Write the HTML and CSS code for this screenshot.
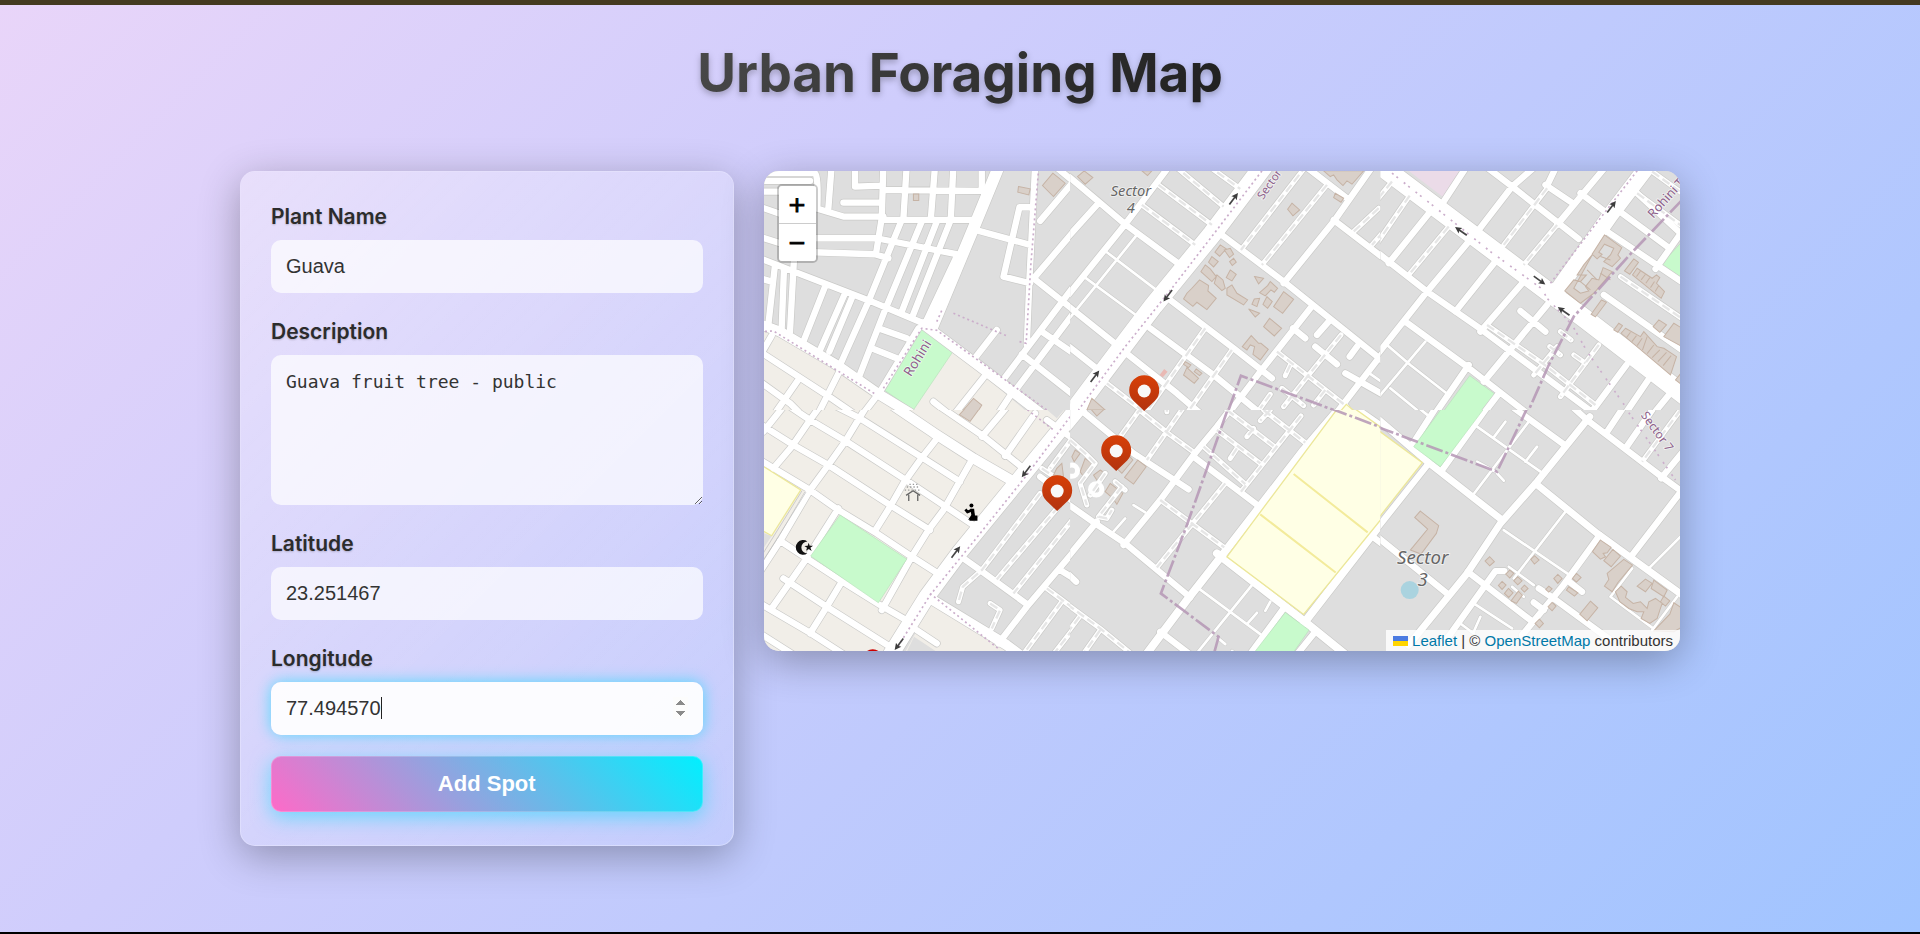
FILE: index.html
```html
<!DOCTYPE html>
<html lang="en">
<head>
<meta charset="utf-8">
<meta name="viewport" content="width=device-width, initial-scale=1">
<title>Urban Foraging Map</title>
<link rel="stylesheet" href="styles.css">
</head>
<body>
<header class="page-header">
  <h1 class="title">Urban Foraging Map</h1>
</header>
<main class="layout">
  <form class="card" onsubmit="return false">
    <div class="field">
      <label for="plant">Plant Name</label>
      <input class="control" id="plant" type="text" value="Guava">
    </div>
    <div class="field">
      <label for="desc">Description</label>
      <textarea class="control control-area" id="desc" spellcheck="false">Guava fruit tree - public</textarea>
    </div>
    <div class="field">
      <label for="lat">Latitude</label>
      <input class="control" id="lat" type="number" step="any" value="23.251467">
    </div>
    <div class="field">
      <label for="lng">Longitude</label>
      <div class="caret-box">
        <input class="control" id="lng" type="number" step="any" value="77.494570" autofocus>
        <span class="caret"></span>
      </div>
    </div>
    <button class="submit" type="submit">Add Spot</button>
  </form>

  <section class="map" aria-label="Map">
    <svg class="map-canvas" viewBox="764 171 916 480" preserveAspectRatio="xMidYMid slice">
      <defs>
        <linearGradient id="pinFill" x1="0" y1="0" x2="0" y2="1"><stop offset="0" stop-color="#d73f07"/><stop offset="1" stop-color="#b2330f"/></linearGradient>
        <g id="pin"><path d="M0 20 L-11 9.500 A15 15 0 1 1 11 9.500 Z" fill="url(#pinFill)"/><circle r="6.500" fill="#f8f8f8"/></g>
        <g id="arrow"><path d="M-21 0H8" stroke="#444" stroke-width="5" fill="none"/><path d="M2-10 22 0 2 10 6 0Z" fill="#3d3d3d"/></g>

        <path id="a-main" d="M718 0 640 190 515 490"/>
        <path id="a-mid" d="M0 478 60 500 230 600 360 690 450 745M490 478 660 605 860 760"/>
        <path id="a-res" d="M0 280 110 323 330 408 490 475M0 48H150M0 80H80M0 25H165Q175 30 172 130M215 0 205 130M0 126 70 150M160 128 250 155H370M0 216 70 238M160 220H350L600 270M160 262 345 268 385 280M285 0V65L365 62M370 0 365 160 348 265M440 0 430 160M250 113H365M370 75 665 78M365 165H640M525 0 512 165M580 0 572 165M665 0V78M425 165 325 410 240 600M485 170 375 435 295 640M530 170 425 440M570 170 455 460M592 270 495 475M0 340 35 350M45 300 25 480M72 310 65 490M102 280 90 500M195 365 130 530M255 385 180 555M275 400 208 560M355 490 440 520M335 550 410 580M475 490 360 680 310 745M645 195 810 240M825 0 808 340 800 540M815 127H778L730 335 810 355M940 50 840 168M940 200 825 335M820 340 940 435M880 0 940 50M940 365 725 650M940 445 755 690M845 500 940 565M785 568 940 690M710 495 640 585M0 560 200 690 280 745M0 650 90 715 120 745M118 640 45 745M238 620 175 745M520 710 570 750M675 632 585 745M755 685 715 745M10 555 35 512"/>

        <path id="b-main" d="M590-10 425 208 250 422 85 640-5 760"/>
        <path id="b-res" d="M-10 30 85 110 165 178 330 300M-10 220 85 115M300 0 165 178-10 395M-10 420 140 540M-10 540 85 615M455 210 640 350 940 590M910 0 790 170 640 355M700 0 830 100M790 165 940 280M300 405 490 550 605 640M175 570 320 685 390 745M240 490 430 630 570 745M720 430 570 620 475 745M668 490 705 520M775 470 740 510M735 545 800 598M860 545 838 575M825 625 940 690M940 560 790 755M-10 740 30 700"/>
        <path id="b-svc" d="M265 60 425 180M215 120 375 240M310 0 460 125M410 0 510 72M710 0 512 255M770 60 575 300M925 130 850 200M940 200 905 240M405 490 225 745M485 555 350 745M110 655 220 740M620 560 830 725M812 510 715 630 640 725M660 600 645 632M765 675 730 720M600 688 570 730M635 670 700 722"/>
        <path id="b-thin" d="M200 210 75 365-10 470M110 262 265 380M45 338 210 460M890 620 940 655"/>

        <path id="c-main" d="M-20-13 200 152 500 378 605 455 940 712"/>
        <path id="c-main2" d="M812-10 690 150 525 385"/>
        <path id="c-res" d="M262 0 190 110M470 0 395 65 295 195M310 0 395 65 595 222M680 0 530 180M495 60 572 112M600 85 680 145M530 0 500 62M770 85 900 205 930 220M725 145 860 245M940 150 825 312M680 200 940 375M150 140 25 295M-10 262 140 380 305 495 640 745M265 230 140 380-10 570M345 290 225 440M430 350 300 500M75 470 260 605 440 745M500 420 310 650M265 600 165 745M352 690 310 745M420 438 495 500M738 600 630 745M803 645 735 745M865 690 820 745M670 390 940 580"/>
        <path id="c-svc" d="M88 92-10 235M35 50-10 105M205 185 85 330M500 70 370 240M530 180 430 300M815 20 940 110M770 85 940 210M720 335 940 485M320 480 500 605 645 720M530 545 460 630M655 540 540 695M540 500 572 525M508 545 540 570M580 570 615 595"/>
        <path id="c-thin" d="M20 540 90 600 205 690M135 530 0 690-20 710M30 670 110 735"/>

        <path id="d-main" d="M960-15 780 205 600 425 500 560 385 745"/>
        <path id="d-mid" d="M390-20 520 68 640 145 770 220M510 565 740 705 800 750"/>
        <path id="d-res" d="M60-30 150 30 260 95 430 205 550 285 640 345M0 42 100 105 205 165 390 285 510 360M0 150 150 240 235 300 350 370 455 440 530 488M190-30 300 25 490 145 600 215M60 392 140 445 240 510 360 585 430 625M70 505 200 590 390 710M0 580 150 668 270 745M0 670 110 740M70-10 10 65M190-25 150 30 95 110 40 175M325-20 255 95 205 165 150 240 65 385-10 500M535 80 480 150 430 220 390 290 345 362M638 145 550 300 505 360 455 440 365 600M235 295 140 445 35 595M245 515 200 590 150 670M540-10 665 75 790 175M745-15 665 80M825 10 735 138M860 30 930 80M610 445 660 480 800 582M940 425 800 590 715 700M470 660 530 700M840 200 880 230 940 275M900 480 940 505"/>
        <path id="d-svc" d="M840 250 665 480 608 530 595 575M895 290 710 508M940 325 760 550M690 580 720 600 695 655M905 575 780 745M940 655 870 745M860 535 940 595M940 80 870 175M845 175 890 205"/>

        <path id="e-cross" d="M45-30-30 60"/>
        <path id="e-main" d="M820-20 700 120 460 430 350 570 215 750M440 430 710 640 840 745M940 330 700 640"/>
        <path id="e-res" d="M20-10 190 130 355 238M490-15 440 50 370 135 270 270 160 405M370 140 565 288M-10 280 75 340 165 400 360 562M80 335-10 445M-10 488 18 515M640 595 530 745M735 665 670 745M850-10 940 52M900 375 940 405M270 665 375 745"/>
        <path id="e-svc" d="M215-10 150 80M195-10 300 75 375 130M345-15 230 150M470 0 610 108M440 60 570 160M400 110 525 222M692 18 512 245M580 0 705 98M550 55 530 80M500 115 480 145M600 0 570 32M270 270 462 412M465 220 260 472M-10 582 90 655 200 745M28 620-10 670M90 660 30 745M0 90 45 130 75 160 30 220 50 285M105 190 60 255M135 215 165 240M155 230 85 320 110 325 125 300M290-10V5"/>
        <path id="e-thin" d="M385 535 570 672M545 525 375 735M560 608 530 642M600 575 585 602M190 285 225 307M165 325 130 365M445 685 465 702M485 722 500 735"/>

        <path id="f-main" d="M-10 25 150 162 365 330M628 20 470 215 360 340 260 490 85 705M465 220 650 370 940 580"/>
        <path id="f-res" d="M395-10 550 103M570-15 620 30 850 205 940 270M905 240 755 435M730-10 680 65M815 0 735 115M940 85 842 205M658 375 545 530 425 675M262 485 450 630M372 483H345L190 700M-10 380 200 550M145 160-10 355M325-15 185 180M175-20 95 105M560 510 605 545M475 535 520 565 690 690M460 577 490 600"/>
        <path id="f-svc" d="M900 0 785 155"/>
        <path id="f-thin" d="M940 340 805 475M370 360 560 490 575 500M555 305 400 505M290 50 480 185M375 35 340 82M470 110 435 155M445 35 280 252M350 190 370 212M290 155 345 185M755 475 690 560 825 660M890 560 815 660M280 580 395 655M300 620 280 665M240 640 280 670M385 470 460 525M110-10 150 22M395 530 430 560"/>
      </defs>

      <path fill="#ffffe5" d="M1370 422 1390 434V506L1370 530Z"/>

      <!-- north-west -->
      <svg x="760" y="165" width="310" height="245" viewBox="0 0 930 735">
        <rect class="land" width="930" height="735"/>
        <path class="resid" d="M0 490 60 505 470 760H0ZM575 560 670 630 800 740H455Z"/>
        <path class="park" d="M485 490 577 562 460 735 368 672Z"/>
        <g class="case"><use href="#a-res" class="w20"/><use href="#a-mid" class="w32"/><use href="#a-main" class="w36"/></g>
        <g class="road"><use href="#a-res" class="w20"/><use href="#a-mid" class="w32"/><use href="#a-main" class="w36"/></g>
        <path class="dots" d="M0 500 40 498 350 690M370 670 485 490 530 496 860 735M580 445 745 515M778 530 798 535 812 300 835 18M530 470 548 430"/>
        <path class="bldg" d="M775 65 810 72 806 90 773 82ZM878 25 915 55 880 95 847 62ZM460 87H476V107H460ZM640 700 665 720 650 745 610 735Z"/>
        <text class="road-label" transform="translate(452 637) rotate(-58)" font-size="40">Rohini</text>
      </svg>

      <!-- north -->
      <svg x="1070" y="165" width="310" height="245" viewBox="0 0 930 735">
        <rect class="land" width="930" height="735"/>
        <g class="case"><use href="#b-thin" class="w8"/><use href="#b-svc" class="w16"/><use href="#b-res" class="w20"/><use href="#b-main" class="w56"/></g>
        <g class="road"><use href="#b-thin" class="w8"/><use href="#b-svc" class="w16"/><use href="#b-res" class="w20"/><use href="#b-main" class="w56"/></g>
        <use href="#b-svc" class="dash"/>
        <path class="dots" d="M575 18 440 195 305 370 165 545 25 735"/>
        <path class="bldg" d="M22 35 42 18 68 38 45 58ZM215 18H245L232 32ZM665 115 688 135 668 153 652 133ZM795 85 820 100 812 112 790 98ZM760 18H880L845 58 830 48 818 62 800 45 790 30 780 35ZM450 240 468 252 448 274 434 262ZM462 255 480 250 490 268 478 278ZM478 290 490 280 498 292 486 302ZM425 275 444 290 430 306 415 292ZM405 300 420 312 438 335 425 350 392 320ZM440 330 458 345 465 370 455 377 432 355ZM480 315 498 328 485 348 468 338ZM388 345 415 362 413 378 438 400 410 434 380 412 368 424 340 402 350 385 365 370ZM470 370 485 360 500 385 532 405 520 420 470 390ZM553 335 580 340 565 357ZM592 362 600 350 622 370 612 382 602 375 585 393 568 383ZM552 402 568 400 560 425 545 418ZM590 395 606 410 592 430 578 418ZM640 380 670 403 637 445 610 425ZM535 432 568 445 555 456ZM598 460 634 490 612 513 580 485ZM543 512 565 535 572 535 594 553 570 585 548 568 553 545 540 540 530 555 516 545ZM345 590 362 600 355 608 340 598ZM350 608 385 640 372 655 340 630ZM378 612 395 625 388 632 372 620ZM65 700 105 735H50Z"/>
        <path fill="#e9b9b4" d="M282 612 292 620 278 637 268 630Z"/>
        <path class="pitch" d="M828 718 805 745H860Z"/>
        <path class="bound" d="M475 735 512 632 790 735"/>
        <use href="#arrow" transform="translate(490 102) rotate(-53)"/>
        <use href="#arrow" transform="translate(293 392) rotate(127)"/>
        <use href="#arrow" transform="translate(74 634) rotate(-53)"/>
        <text class="place" text-anchor="middle" font-size="44"><tspan x="182" y="92">Sector</tspan><tspan x="182" y="144">4</tspan></text>
        <text class="road-label" transform="translate(578 106) rotate(-55)" font-size="34">Sector</text>
      </svg>

      <!-- north-east -->
      <svg x="1380" y="165" width="310" height="245" viewBox="0 0 930 735">
        <rect class="land" width="930" height="735"/>
        <path fill="#ebdbe8" d="M85 18H250L190 98Z"/>
        <path class="park" d="M268 632 343 687 300 745H185ZM905 230 838 302 905 352Z"/>
        <g class="case"><use href="#c-thin" class="w8"/><use href="#c-svc" class="w16"/><use href="#c-res" class="w20"/><use href="#c-main" class="w56"/><use href="#c-main2" class="w50"/></g>
        <g class="road"><use href="#c-thin" class="w8"/><use href="#c-svc" class="w16"/><use href="#c-res" class="w20"/><use href="#c-main" class="w56"/><use href="#c-main2" class="w50"/></g>
        <use href="#c-svc" class="dash"/>
        <path class="dots" d="M510 355 640 185 770 18"/>
        <path class="dots wide" d="M35 25 170 132 330 260 485 372 500 400 575 480 620 560 735 725"/>
        <path class="bldg" d="M672 210 724 248 712 270 720 280 695 305 670 290 690 270 700 250 672 238 655 262 665 268 650 282 635 268ZM635 270 610 300 590 330 618 330 600 350 580 345 553 378 600 415 640 385 670 350 695 320 668 308 655 345 635 340 615 365 625 378 600 385 580 370ZM760 282 774 292 748 328 732 318ZM770 310 815 340 828 330 838 338 828 355 852 380 842 400 756 330ZM663 405 678 412 645 456 632 448ZM715 475 726 482 712 502 700 495ZM735 490 780 515 790 500 830 545 850 550 888 575 870 630 722 505ZM835 465 858 480 838 502 818 485ZM880 475 905 490V545L850 515ZM905 620 885 645 905 660Z"/>
        <path d="M780 318 768 335M795 328 782 345M808 338 796 355M822 350 810 368M835 362 824 380M750 502 738 518M768 512 754 530M785 520 770 542M800 515 786 555M820 540 800 566M838 555 815 578M858 562 832 590M872 572 848 602M620 315 650 345M660 275 690 285M600 350 630 375M660 325 690 345" stroke="#c6b3a5" stroke-width="3"/>
        <path class="bound" d="M905 105 755 262 580 455 505 600 445 735"/>
        <use href="#arrow" transform="translate(693 126) rotate(-53)"/>
        <use href="#arrow" transform="translate(242 199) rotate(215)"/>
        <use href="#arrow" transform="translate(477 346) rotate(36)"/>
        <use href="#arrow" transform="translate(550 439) rotate(215)"/>
        <text class="road-label" transform="translate(818 162) rotate(-48)" font-size="38">Rohini T</text>
      </svg>

      <!-- south-west -->
      <svg x="760" y="410" width="310" height="245" viewBox="0 0 930 735">
        <rect class="resid" width="930" height="735"/>
        <path class="land" d="M940-10V745H770L515 585 460 680 425 745H385L500 560 800 200 960-15ZM850-10 890 25 920-10ZM430 745 462 680 560 745ZM0 365 35 378 0 430Z"/>
        <path class="resid" d="M515 585 470 655 570 720 780 745Z"/>
        <g class="case"><use href="#d-svc" class="w16"/><use href="#d-res" class="w20"/><use href="#d-mid" class="w32"/><use href="#d-main" class="w50"/></g>
        <path class="pitch" d="M0 162 122 240 35 377 0 358Z"/>
        <g class="road"><use href="#d-svc" class="w16"/><use href="#d-res" class="w20"/><use href="#d-mid" class="w32"/><use href="#d-main" class="w50"/></g>
        <use href="#d-svc" class="dash"/>
        <path class="park" d="M240 315 440 447 355 578 152 438Z"/>
        <path d="M126 242 8 432M138 246 8 455" stroke="#bbb" stroke-width="2" fill="none"/>
        <path class="dots" d="M930 20 800 195 640 395 510 555 410 715M510 550 720 720M790-10 880 60"/>
        <path class="bldg" d="M620-10 655 0 630 34 598 14ZM890 175 905 160 910 200 880 195Z"/>
        <use href="#arrow" transform="translate(798 184) rotate(127)"/>
        <use href="#arrow" transform="translate(587 426) rotate(-53)"/>
        <use href="#arrow" transform="translate(417 702) rotate(127)"/>
        <path d="M142 394A22 22 0 1 0 142 430 18 18 0 1 1 142 394ZM146 398 149 407 159 407 151 413 155 423 146 417 138 422 141 413 133 408 143 407Z" fill="#111"/>
        <path d="M438 256 459 242 480 256M446 254V273M473 254V273" fill="none" stroke="#666" stroke-width="4"/>
        <path d="M434 240H484M440 231H480M448 223H476" fill="none" stroke="#999" stroke-width="4" stroke-dasharray="4 6"/>
        <circle cx="634" cy="286" r="6"/>
        <path d="M636 298 640 320H652M616 298 622 306 636 300M628 328H652" fill="none" stroke="#000" stroke-width="8" stroke-linejoin="round"/>
        <path d="M630 296H642L645 322 624 330 634 314Z"/>
        <circle cx="338" cy="746" r="29" fill="#c00"/>
      </svg>

      <!-- south -->
      <svg x="1070" y="410" width="310" height="245" viewBox="0 0 930 735">
        <rect class="land" width="930" height="735"/>
        <path class="bldg" d="M60-5H105L80 18ZM15 120 30 130 12 155 5 140ZM45 145 65 160 40 200 30 185ZM90 180 105 190 80 210 70 195ZM120 220 158 250 140 283 128 265 105 245ZM175 135 188 150 155 190 140 175Z"/>
        <g class="case"><use href="#e-thin" class="w8"/><use href="#e-svc" class="w16"/><use href="#e-res" class="w20"/><use href="#e-main" class="w24"/><use href="#e-cross" class="w50"/></g>
        <g class="road"><use href="#e-thin" class="w8"/><use href="#e-svc" class="w16"/><use href="#e-res" class="w20"/><use href="#e-main" class="w24"/><use href="#e-cross" class="w50"/><circle cx="78" cy="238" r="17" class="w16"/><circle cx="5" cy="182" r="17" class="w16"/></g>
        <use href="#e-svc" class="dash"/>
        <path class="pitch" d="M806-10H845L940 58V318L700 613 470 440Z"/>
        <path d="M670 192 892 367M570 313 796 487" stroke="#f3eb9b" stroke-width="6"/>
        <path class="park" d="M645 607 716 660 660 740H542Z"/>
        <path class="bldg" d="M203 150 228 170 190 222 163 202Z"/>
        <path class="bound" d="M470 5 405 190 350 345 272 550 445 680 430 735M780-5 940 55"/>
      </svg>

      <!-- south-east -->
      <svg x="1380" y="410" width="310" height="245" viewBox="0 0 930 735">
        <rect class="land" width="930" height="735"/>
        <g class="case"><use href="#f-thin" class="w8"/><use href="#f-svc" class="w16"/><use href="#f-res" class="w20"/><use href="#f-main" class="w22"/></g>
        <g class="road"><use href="#f-thin" class="w8"/><use href="#f-svc" class="w16"/><use href="#f-res" class="w20"/><use href="#f-main" class="w22"/></g>
        <use href="#f-svc" class="dash"/>
        <path class="pitch" d="M-10 58 126 158-10 330Z"/>
        <path class="park" d="M188-10H315L180 170 100 110Z"/>
        <path class="bldg" d="M120 303 175 347 168 370 122 432 90 420 142 357 103 322ZM328 440 342 455 328 467 314 453ZM463 437 476 450 462 462 451 448ZM388 480 400 490 388 504 376 492ZM365 514 377 525 365 538 354 526ZM412 500 425 512 412 524 400 512ZM384 535 398 548 385 562 372 550ZM414 543 426 555 408 580 392 572ZM432 525 443 535 432 546 422 536ZM532 493 545 505 532 520 520 505ZM588 490 602 502 588 516 576 505ZM565 530 592 548 582 558 558 540ZM505 528 515 536 505 546 496 538ZM515 577 527 588 515 602 503 590ZM477 627 489 640 477 653 464 640ZM630 573 652 593 620 632 598 612ZM660 390 692 412 680 428 668 430 675 440 660 447 636 425ZM697 418 720 438 692 470 670 452ZM730 448 756 465 712 518 695 545 672 528 685 508 680 490ZM722 528 740 545 735 562 758 580 780 575 800 595 805 575 825 565 845 580 838 600 830 625 808 640 782 625 790 605 770 605 745 595 718 575 705 545ZM795 507 815 520 795 545 770 528ZM820 510 860 540 850 560 812 535ZM850 558 868 572 855 588 840 575ZM880 578 905 595V650L880 665 820 662 868 612Z"/>
        <circle cx="88" cy="540" r="27" fill="#aad3df"/>
        <path class="bound" d="M-10 50 350 185 400 80 440-5"/>
        <path class="dots wide" d="M745 8 885 210"/>
        <text class="place" text-anchor="middle" font-size="56"><tspan x="127" y="462">Sector</tspan><tspan x="127" y="529">3</tspan></text>
        <text class="road-label" transform="translate(780 16) rotate(54)" font-size="36">Sector 7</text>
      </svg>

      <use href="#pin" x="1144" y="391"/>
      <use href="#pin" x="1116" y="451"/>
      <use href="#pin" x="1057" y="491"/>
    </svg>
    <div class="zoom">
      <button type="button" aria-label="Zoom in">+</button>
      <button type="button" aria-label="Zoom out">−</button>
    </div>
    <div class="attribution">
      <a href="#"><svg class="flag" viewBox="0 0 12 8"><path fill="#4c7be1" d="M0 0h12v4H0z"/><path fill="#ffd500" d="M0 4h12v4H0z"/></svg> Leaflet</a> | © <a href="#">OpenStreetMap</a> contributors
    </div>
  </section>
</main>
</body>
</html>
```
FILE: styles.css
```css
* { box-sizing: border-box; }

body {
  margin: 0;
  min-height: 100vh;
  border-top: 5px solid #443a20;
  border-bottom: 2px solid #000;
  background: linear-gradient(135deg, #e9d5f9 0%, #cfcdfc 35%, #a0c4ff 100%) padding-box;
  color: #2c2c2c;
  font-family: Inter, "Open Sans", sans-serif;
}

.page-header { padding: 30px 24px 60px; text-align: center; }

.title {
  margin: 0 auto;
  width: fit-content;
  font-size: 53px;
  line-height: 76px;
  font-weight: 700;
  background: linear-gradient(135deg, #4a4a4a, #1f1f1f);
  background-clip: text;
  -webkit-background-clip: text;
  color: transparent;
  filter: drop-shadow(0 3px 3px rgba(0, 0, 0, .25));
}

.layout {
  display: grid;
  grid-template-columns: 35fr 65fr;
  align-items: start;
  gap: 30px;
  width: 75%;
  margin: 0 auto;
}

.card {
  display: flex;
  flex-direction: column;
  gap: 24px;
  padding: 30px 30px 33px;
  border: 1px solid rgba(255, 255, 255, .35);
  border-radius: 15px;
  background: linear-gradient(135deg, rgba(255, 255, 255, .3), rgba(255, 255, 255, .05));
  box-shadow: 0 10px 40px rgba(0, 0, 0, .3);
  background-clip: padding-box;
}

.field { display: flex; flex-direction: column; gap: 8px; }

.field label {
  font-size: 21px;
  line-height: 30px;
  font-weight: 600;
  text-shadow: 0 1px 2px rgba(0, 0, 0, .2);
}

.control {
  display: block;
  width: 100%;
  height: 53px;
  padding: 0 15px;
  border: 0;
  border-radius: 10px;
  outline: 0;
  background: rgba(255, 255, 255, .7);
  color: #333;
  font: 20px "Liberation Sans", Arial, sans-serif;
}

.control-area {
  height: 150px;
  padding: 15px;
  font: 18px/23px "DejaVu Sans Mono", monospace;
  resize: vertical;
}

.control:focus {
  background: rgba(255, 255, 255, .93);
  box-shadow: 0 0 15px rgba(0, 220, 255, .6);
}

.control:focus::-webkit-inner-spin-button { opacity: 1; }

.caret-box { position: relative; }
.caret-box .control { caret-color: transparent; }
.caret {
  position: absolute;
  top: 15px;
  left: 110px;
  width: 1px;
  height: 22px;
  background: #222;
}

.submit {
  height: 56px;
  margin-top: -3px;
  border: 1px solid rgba(255, 255, 255, .2);
  border-radius: 10px;
  background: linear-gradient(45deg, #ff6ac8, #00f0ff) border-box;
  box-shadow: 0 5px 20px rgba(0, 220, 255, .5);
  color: #fff;
  font: 700 22px "Liberation Sans", Arial, sans-serif;
}

.map {
  position: relative;
  height: 480px;
  overflow: hidden;
  border-radius: 15px;
  background: #dedede;
  box-shadow: 0 10px 40px rgba(0, 0, 0, .3);
}

.map-canvas { display: block; width: 100%; height: 100%; }

.land { fill: #dedede; }
.resid { fill: #f1eee8; }
.park { fill: #c8facc; stroke: #b8e3bb; stroke-width: 2px; }
.pitch { fill: #ffffe5; stroke: #ece79a; stroke-width: 4px; }
.bldg { fill: #d9d0c9; stroke: #c6b3a5; stroke-width: 3px; }

.road, .case { fill: none; stroke-linecap: round; stroke-linejoin: round; }
.road { stroke: #fff; }
.case { stroke: #cacac8; }
.road .w8 { stroke-width: 8px; }
.road .w16 { stroke-width: 15px; }
.road .w20 { stroke-width: 19px; }
.road .w22 { stroke-width: 21px; }
.road .w24 { stroke-width: 24px; }
.road .w32 { stroke-width: 30px; }
.road .w36 { stroke-width: 35px; }
.road .w50 { stroke-width: 48px; }
.road .w56 { stroke-width: 57px; }
.case .w8 { stroke-width: 11px; }
.case .w16 { stroke-width: 19px; }
.case .w20 { stroke-width: 23px; }
.case .w22 { stroke-width: 25px; }
.case .w24 { stroke-width: 28px; }
.case .w32 { stroke-width: 34px; }
.case .w36 { stroke-width: 39px; }
.case .w50 { stroke-width: 52px; }
.case .w56 { stroke-width: 61px; }

.dash { fill: none; stroke: #e6e6e6; stroke-width: 7px; stroke-dasharray: 26 12; }
.dots { fill: none; stroke: #cbaecb; stroke-width: 5px; stroke-dasharray: 6 9; }
.dots.wide { stroke-dasharray: 6 11 6 22; }
.bound { fill: none; stroke: #b596b5; stroke-opacity: .85; stroke-width: 8px; stroke-dasharray: 52 9 9 9; }

.place, .road-label { font-family: "Noto Sans", sans-serif; paint-order: stroke; stroke: rgba(255, 255, 255, .6); stroke-width: 5px; }
.place { font-style: italic; fill: #666; }
.road-label { fill: #8d618b; }

.zoom {
  position: absolute;
  top: 13px;
  left: 13px;
  display: flex;
  flex-direction: column;
  border: 2px solid rgba(0, 0, 0, .2);
  border-radius: 5px;
  background-clip: padding-box;
}

.zoom button {
  width: 37px;
  height: 37px;
  padding: 0;
  border: 0;
  border-radius: 0 0 3px 3px;
  background: #fff;
  color: #000;
  font: 22px/36px "DejaVu Sans", sans-serif;
  -webkit-text-stroke: 1px #000;
}

.zoom button:first-child { height: 38px; border-bottom: 1px solid #ccc; border-radius: 3px 3px 0 0; }

.attribution {
  position: absolute;
  right: 0;
  bottom: 0;
  padding: 0 7px;
  background: rgba(255, 255, 255, .8);
  color: #333;
  font: 15px/21px "Liberation Sans", Arial, sans-serif;
}

.attribution a { color: #0078a8; text-decoration: none; }
.flag { width: 15px; height: 10px; }
```
